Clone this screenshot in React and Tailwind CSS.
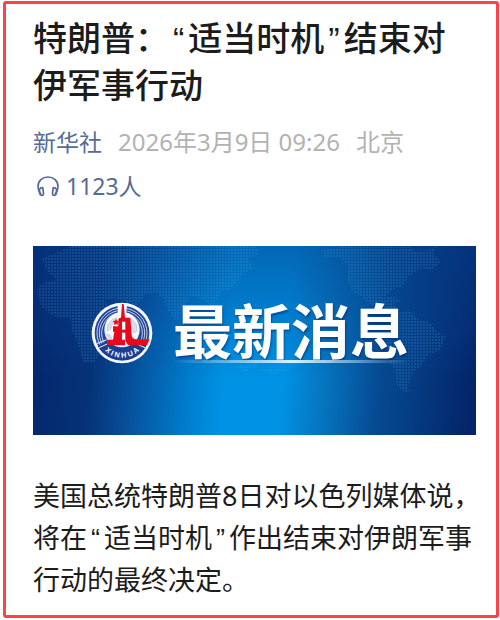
function Quote({ children }) {
  return <span className="px-1 font-['Liberation_Sans',sans-serif] leading-none">{children}</span>;
}

function HeadphoneIcon() {
  return (
    <svg
      className="w-6 h-6"
      viewBox="0 0 24 24"
      fill="none"
      stroke="currentColor"
      strokeWidth="1.7"
      strokeLinejoin="round"
      strokeLinecap="round"
      aria-hidden="true"
    >
      <path d="M4.600 19.600C2.900 17.600 2 15.300 2 12.600 2 7 6.400 3 12 3s10 4 10 9.600c0 2.700-.9 5-2.600 7" />
      <path d="M6.800 13.800c-1.500-.4-3 .5-3.300 2l-.1 2c.2 1.700 1 3.300 2.200 3.500 1.500.2 2-.6 1.900-2z" />
      <path d="M17.200 13.800c1.500-.4 3 .5 3.300 2l.1 2c-.2 1.700-1 3.300-2.200 3.500-1.500.2-2-.6-1.900-2z" />
    </svg>
  );
}

function Logo() {
  return (
    <svg className="w-[62px] h-[62px] shrink-0" viewBox="-3 -3 186 186" role="img" aria-label="XINHUA">
      <defs>
        <path id="logo-arc" d="M16 90A74 74 0 0 0 164 90" />
      </defs>
      <circle cx="90" cy="90" r="91" fill="#f4f7fb" />
      <circle cx="90" cy="90" r="82" fill="#23469a" />
      <g fill="none" stroke="#e4ebf6" strokeWidth="2.5">
        <circle cx="90" cy="90" r="75" />
        <circle cx="90" cy="90" r="68" />
        <circle cx="90" cy="90" r="61" />
      </g>
      <path d="M17 128A82 82 0 0 0 163 128L134 114Q90 152 46 114z" fill="#1c3d92" />
      <path d="M14 122L44 110M21 134L52 120M166 122L136 110M159 134L128 120" stroke="#f4f7fb" strokeWidth="3" />
      <circle cx="90" cy="80" r="53" fill="#f6f7fb" />
      <path d="M76 0h30l-4 34H78z" fill="#f4f7fb" />
      <g fill="#d9dfec" stroke="#aeb9d2" strokeWidth="1.5">
        <path d="M46 66l14-16 14-6-2 13-12 8-4 14-10 4z" />
        <path d="M108 45l14 5 12 16 2 18-10 6-6-14-12-6z" />
        <path d="M44 94l10 2 6 10-6 6z" />
      </g>
      <g fill="#e30b1c">
        <path d="M90 3h5l4 41h16l4 52q2 13 13 13h41l-8 18h-57l-8-14V56H90v54h9v17H45v-17h18l4-24h-4V70h18v40h-2V50q0-6 6-6h2z" />
        <path d="M70 80h38v9H70z" />
        <path d="M72 47l3 6 7 1-5 5 1 7-6-3-6 3 1-7-5-5 7-1z" />
      </g>
      <text
        className="font-['Liberation_Sans',sans-serif] font-bold"
        fontSize="22"
        fill="#fff"
        textAnchor="middle"
      >
        <textPath href="#logo-arc" startOffset="50%">
          X I N H U A
        </textPath>
      </text>
    </svg>
  );
}

function WorldMap() {
  return (
    <svg
      className="absolute inset-0 w-full h-full"
      viewBox="0 0 443 189"
      preserveAspectRatio="none"
      aria-hidden="true"
    >
      <defs>
        <pattern id="dots" width="3" height="3" patternUnits="userSpaceOnUse">
          <rect width="2" height="2" fill="#49b4ea" />
        </pattern>
      </defs>
      <g fill="url(#dots)" opacity="0.18">
        <path d="M9 12L25 6 38 0H223L225 8 215 12 220 22 208 30 200 42 190 45 180 60 167 52 158 50 150 62 144 76 136 66 130 52 121 46 112 48 104 60 94 56 82 52 72 54 76 62 84 68 76 82 72 98 62 116 50 116 46 100 39 84 37 72 20 70 8 60 4 42 12 36 24 34 14 26z" />
        <path d="M287 4L310 1H376L381 5 394 4 404 0 400 8 408 16 398 24 388 22 376 30 370 40 358 44 352 52 360 50 368 56 360 58 368 66 376 64 386 74 396 76 404 86 413 90 408 104 396 108 388 120 380 126 374 142 380 144 372 146 364 140 362 124 354 112 352 92 358 78 350 64 340 60 330 52 320 46 314 34 316 20 308 12 292 12z" />
        <path d="M205 120l12-2 8-3v5l-14 6z" />
        <path d="M226 124l26-10 18 4-14 6-14 4z" />
      </g>
    </svg>
  );
}

function Banner() {
  return (
    <section className="relative mt-11 flex h-[189px] items-center overflow-hidden bg-[#07418b] bg-[linear-gradient(to_bottom,rgba(6,60,135,0.5),rgba(6,70,150,0.2)_45%,transparent_70%),linear-gradient(95deg,#04256b_0%,#063277_15%,#0657a3_26%,#007bcb_36%,#0092e4_44%,#0092e4_57%,#0675c0_66%,#054a92_78%,#04256a_98%)] pr-6 pb-4 pl-[58px]">
      <WorldMap />
      <div className="relative flex items-center gap-5">
        <Logo />
        <div className="relative">
          <h2 className="pb-1 text-[59px] leading-[52px] font-bold whitespace-nowrap text-white [text-shadow:1px_2px_2px_rgba(0,40,100,0.5)]">
            最新消息
          </h2>
          <div className="absolute -bottom-0.5 left-0 h-[3px] w-full bg-linear-to-r from-transparent via-[#d8f2ff] to-transparent" />
        </div>
      </div>
    </section>
  );
}

export default function App() {
  return (
    <div className="bg-white pt-px pr-px pb-px pl-[3px]">
      <article
        lang="zh-CN"
        className="rounded-[3px] border-[3px] border-[#fd4347] bg-white pt-[11px] pr-5 pb-[14px] pl-[27px] font-['Noto_Sans','Noto_Sans_CJK_SC',sans-serif] text-[#1c1c1c]"
      >
        <h1 className="text-[34px] leading-[47px] font-medium">
          特朗普：<Quote>“</Quote>适当时机<Quote>”</Quote>结束对伊军事行动
        </h1>
        <div className="mt-[17px] flex flex-wrap items-center gap-4 text-[24px] leading-8 text-[#b2b2b2]">
          <a href="#" className="text-[23px] text-[#576b95]">
            新华社
          </a>
          <time dateTime="2026-03-09T09:26">2026年3月9日 09:26</time>
          <span>北京</span>
        </div>
        <button type="button" className="mt-3 flex items-center gap-1.5 pl-[3px] text-[23px] leading-8 text-[#576b95]">
          <HeadphoneIcon />
          1123人
        </button>
        <Banner />
        <p className="-mr-3 mt-10 text-[27px] leading-[42px]">
          美国总统特朗普8日对以色列媒体说，将在<Quote>“</Quote>适当时机<Quote>”</Quote>
          作出结束对伊朗军事行动的最终决定。
        </p>
      </article>
    </div>
  );
}
